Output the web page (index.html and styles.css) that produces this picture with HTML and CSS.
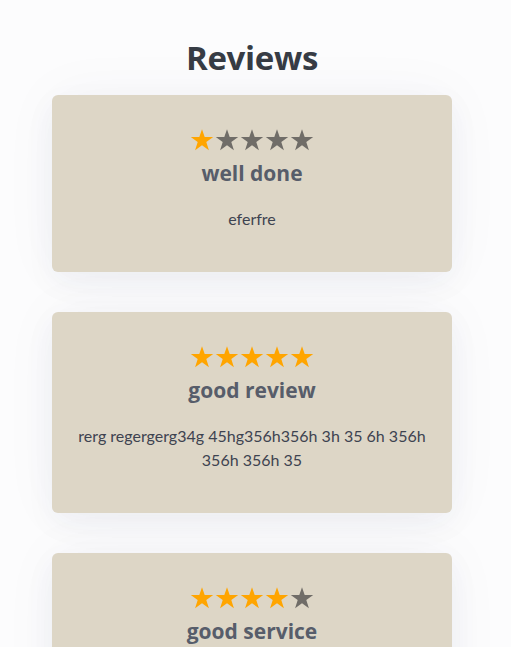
FILE: index.html
```html
<!DOCTYPE html>
<html lang="en">
<head>
<meta charset="utf-8">
<title>Reviews</title>
<link rel="stylesheet" href="styles.css">
</head>
<body>
<svg width="0" height="0" class="defs" aria-hidden="true">
  <defs>
    <symbol id="star" viewBox="0 0 24 24">
      <path d="M12 1.2 L14.7 9.1 L23.2 9.1 L16.3 14 L18.9 22.2 L12 17.2 L5.1 22.2 L7.7 14 L0.8 9.1 L9.3 9.1 Z"/>
    </symbol>
  </defs>
</svg>
<section class="reviews">
  <h2 class="reviews-title">Reviews</h2>
  <div class="review-list">
    <article class="card">
      <div class="stars">
        <svg class="star on"><use href="#star"/></svg>
        <svg class="star"><use href="#star"/></svg>
        <svg class="star"><use href="#star"/></svg>
        <svg class="star"><use href="#star"/></svg>
        <svg class="star"><use href="#star"/></svg>
      </div>
      <h3 class="card-title">well done</h3>
      <p class="card-text">eferfre</p>
    </article>
    <article class="card">
      <div class="stars">
        <svg class="star on"><use href="#star"/></svg>
        <svg class="star on"><use href="#star"/></svg>
        <svg class="star on"><use href="#star"/></svg>
        <svg class="star on"><use href="#star"/></svg>
        <svg class="star on"><use href="#star"/></svg>
      </div>
      <h3 class="card-title">good review</h3>
      <p class="card-text">rerg regergerg34g 45hg356h356h 3h 35 6h 356h 356h 356h 35</p>
    </article>
    <article class="card">
      <div class="stars">
        <svg class="star on"><use href="#star"/></svg>
        <svg class="star on"><use href="#star"/></svg>
        <svg class="star on"><use href="#star"/></svg>
        <svg class="star on"><use href="#star"/></svg>
        <svg class="star"><use href="#star"/></svg>
      </div>
      <h3 class="card-title">good service</h3>
      <p class="card-text">great service</p>
    </article>
  </div>
</section>
</body>
</html>
```
FILE: styles.css
```css
* { box-sizing: border-box; }
html, body { margin: 0; padding: 0; }
body {
  background: #fcfcfd;
  font-family: "Open Sans", "Noto Sans", sans-serif;
  color: #374151;
}
.defs { position: absolute; width: 0; height: 0; overflow: hidden; }
.reviews {
  padding: 34px 7px 0 0;
  display: flex;
  flex-direction: column;
  align-items: center;
}
.reviews-title {
  margin: 0 0 13px;
  font-size: 33px;
  line-height: 48px;
  font-weight: 700;
  letter-spacing: -0.3px;
  color: #373c45;
}
.review-list {
  display: flex;
  flex-direction: column;
  gap: 40px;
  width: 400px;
}
.card {
  background: #ddd6c6;
  border-radius: 6px;
  padding: 33px 24px 25px;
  text-align: center;
  box-shadow: 0 10px 30px rgba(40, 50, 90, 0.05), 0 0 60px rgba(40, 50, 90, 0.04);
}
.stars {
  display: flex;
  justify-content: center;
  gap: 1px;
  height: 23px;
}
.star {
  width: 24px;
  height: 24px;
  fill: #706d68;
}
.star.on { fill: #ffa500; }
.card-title {
  margin: 7px 0 0;
  font-size: 21px;
  line-height: 30px;
  font-weight: 700;
  color: #575d6a;
}
.card-text {
  margin: 19px 0 16px;
  font-family: "Lato", "Open Sans", sans-serif;
  font-size: 16px;
  line-height: 24px;
  color: #3d4350;
}
```
